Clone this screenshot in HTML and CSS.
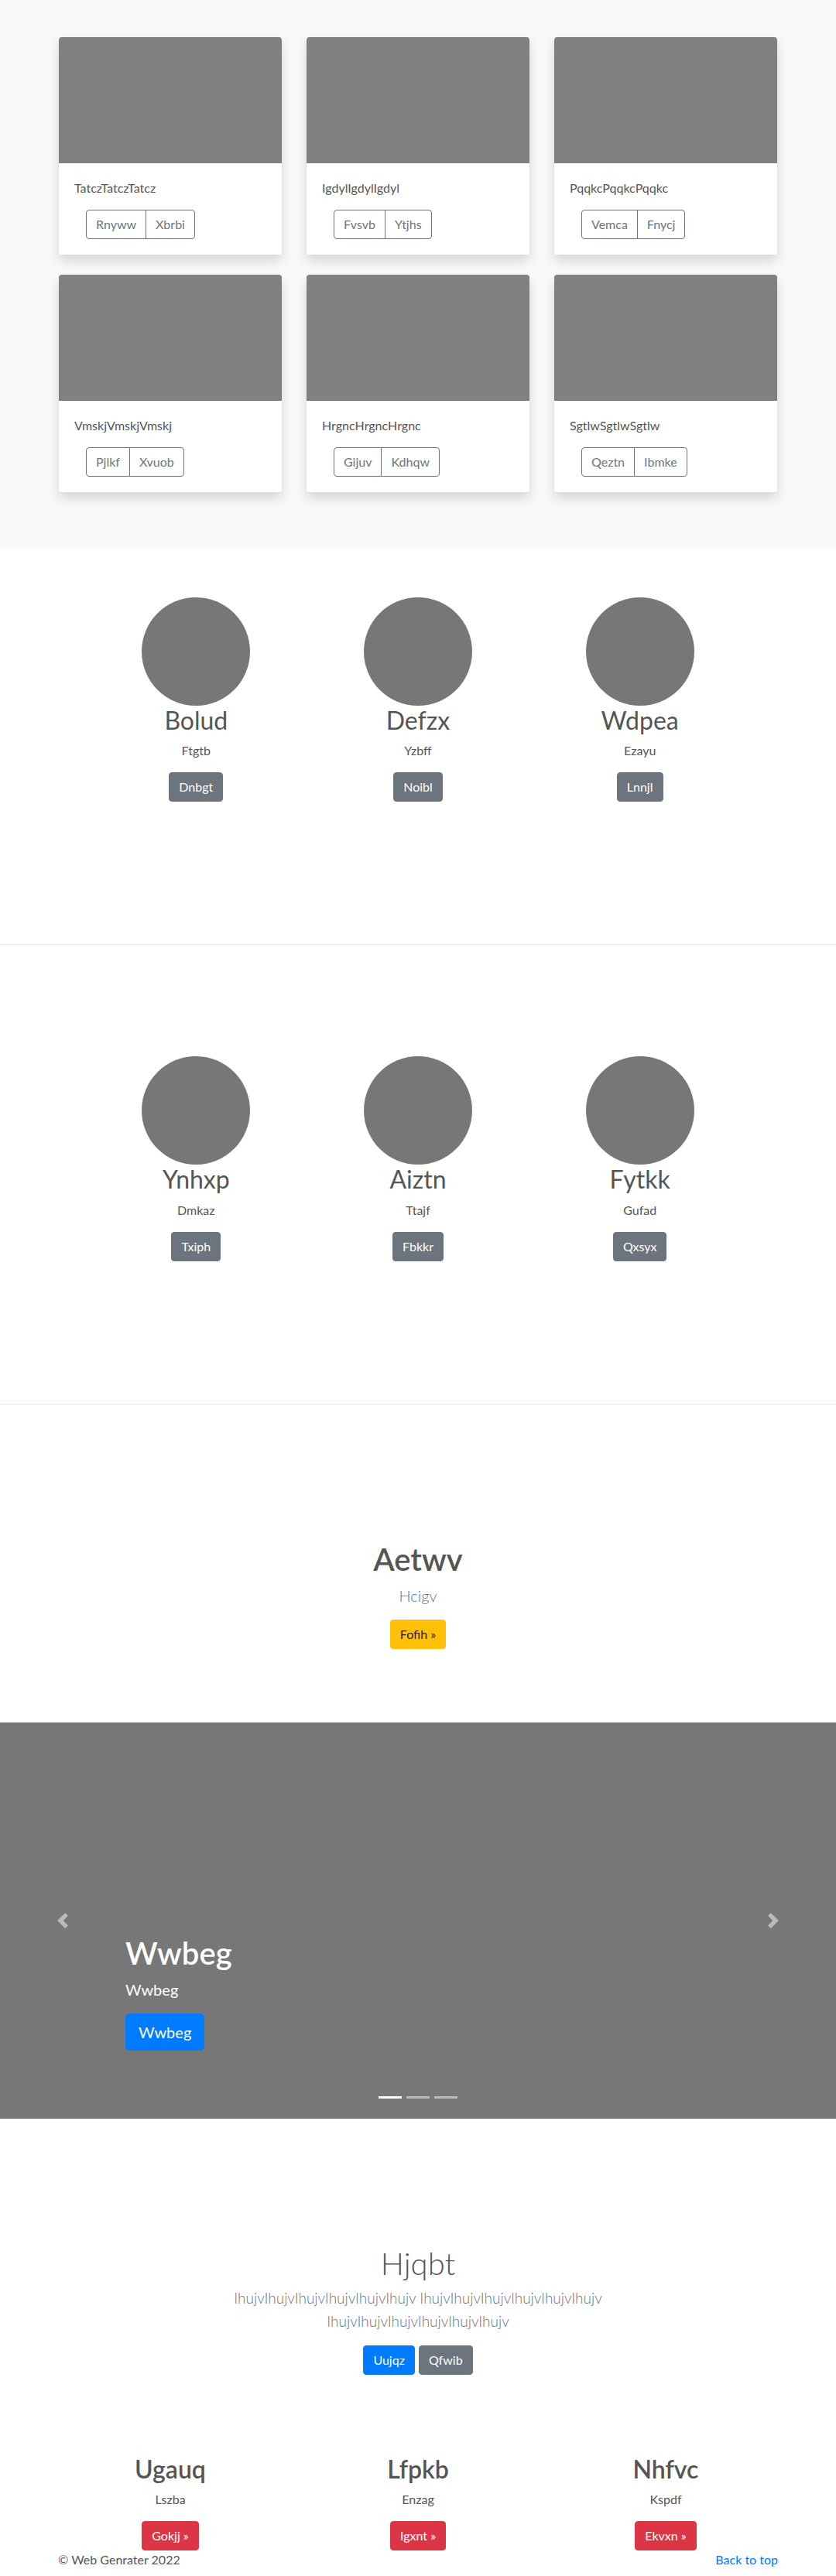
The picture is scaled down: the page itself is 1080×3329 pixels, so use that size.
FILE: index.html
```html
<!DOCTYPE html>
<html lang="en">
<head>
<meta charset="utf-8">
<title>Web Genrater</title>
<link rel="stylesheet" href="styles.css">
</head>
<body>
<section class="album">
  <div class="album-grid">
    <div class="card">
      <div class="card-img"></div>
      <div class="card-body">
        <p class="card-text">TatczTatczTatcz</p>
        <div class="btn-group"><a href="#" class="btn btn-outline">Rnyww</a><a href="#" class="btn btn-outline">Xbrbi</a></div>
      </div>
    </div>
    <div class="card">
      <div class="card-img"></div>
      <div class="card-body">
        <p class="card-text">IgdylIgdylIgdyl</p>
        <div class="btn-group"><a href="#" class="btn btn-outline">Fvsvb</a><a href="#" class="btn btn-outline">Ytjhs</a></div>
      </div>
    </div>
    <div class="card">
      <div class="card-img"></div>
      <div class="card-body">
        <p class="card-text">PqqkcPqqkcPqqkc</p>
        <div class="btn-group"><a href="#" class="btn btn-outline">Vemca</a><a href="#" class="btn btn-outline">Fnycj</a></div>
      </div>
    </div>
    <div class="card">
      <div class="card-img"></div>
      <div class="card-body">
        <p class="card-text">VmskjVmskjVmskj</p>
        <div class="btn-group"><a href="#" class="btn btn-outline">Pjlkf</a><a href="#" class="btn btn-outline">Xvuob</a></div>
      </div>
    </div>
    <div class="card">
      <div class="card-img"></div>
      <div class="card-body">
        <p class="card-text">HrgncHrgncHrgnc</p>
        <div class="btn-group"><a href="#" class="btn btn-outline">Gijuv</a><a href="#" class="btn btn-outline">Kdhqw</a></div>
      </div>
    </div>
    <div class="card">
      <div class="card-img"></div>
      <div class="card-body">
        <p class="card-text">SgtlwSgtlwSgtlw</p>
        <div class="btn-group"><a href="#" class="btn btn-outline">Qeztn</a><a href="#" class="btn btn-outline">Ibmke</a></div>
      </div>
    </div>
  </div>
</section>

<section class="marketing">
  <div class="feature-grid">
    <div class="feature">
      <div class="circle"></div>
      <h2>Bolud</h2>
      <p>Ftgtb</p>
      <div class="actions"><a href="#" class="btn btn-secondary">Dnbgt</a></div>
    </div>
    <div class="feature">
      <div class="circle"></div>
      <h2>Defzx</h2>
      <p>Yzbff</p>
      <div class="actions"><a href="#" class="btn btn-secondary">Noibl</a></div>
    </div>
    <div class="feature">
      <div class="circle"></div>
      <h2>Wdpea</h2>
      <p>Ezayu</p>
      <div class="actions"><a href="#" class="btn btn-secondary">Lnnjl</a></div>
    </div>
  </div>
</section>

<hr class="divider">

<section class="marketing">
  <div class="feature-grid">
    <div class="feature">
      <div class="circle"></div>
      <h2>Ynhxp</h2>
      <p>Dmkaz</p>
      <div class="actions"><a href="#" class="btn btn-secondary">Txiph</a></div>
    </div>
    <div class="feature">
      <div class="circle"></div>
      <h2>Aiztn</h2>
      <p>Ttajf</p>
      <div class="actions"><a href="#" class="btn btn-secondary">Fbkkr</a></div>
    </div>
    <div class="feature">
      <div class="circle"></div>
      <h2>Fytkk</h2>
      <p>Gufad</p>
      <div class="actions"><a href="#" class="btn btn-secondary">Qxsyx</a></div>
    </div>
  </div>
</section>

<hr class="divider">

<section class="cta">
  <h1 class="cta-title">Aetwv</h1>
  <p class="lead">Hcigv</p>
  <div class="center-actions"><a href="#" class="btn btn-warning">Fofih &raquo;</a></div>
</section>

<section class="carousel">
  <div class="carousel-caption">
    <h1>Wwbeg</h1>
    <p>Wwbeg</p>
    <div class="cap-actions"><a href="#" class="btn btn-lg btn-primary">Wwbeg</a></div>
  </div>
  <a href="#" class="carousel-control prev">
    <svg width="20" height="20" viewBox="0 0 8 8" fill="#fff"><path d="M5.25 0l-4 4 4 4 1.5-1.5L4.25 4l2.5-2.5L5.25 0z"/></svg>
  </a>
  <a href="#" class="carousel-control next">
    <svg width="20" height="20" viewBox="0 0 8 8" fill="#fff"><path d="M2.75 0l-1.5 1.5L3.75 4l-2.5 2.5L2.75 8l4-4-4-4z"/></svg>
  </a>
  <ol class="indicators">
    <li class="active"></li>
    <li></li>
    <li></li>
  </ol>
</section>

<section class="intro">
  <h1 class="intro-title">Hjqbt</h1>
  <p class="lead intro-lead">IhujvIhujvIhujvIhujvIhujvIhujv IhujvIhujvIhujvIhujvIhujvIhujv IhujvIhujvIhujvIhujvIhujvIhujv</p>
  <div class="intro-actions"><a href="#" class="btn btn-primary">Uujqz</a><a href="#" class="btn btn-secondary">Qfwib</a></div>
</section>

<section class="columns">
  <div class="col-grid">
    <div class="col">
      <h2>Ugauq</h2>
      <p>Lszba</p>
      <div class="actions"><a href="#" class="btn btn-danger">Gokjj &raquo;</a></div>
    </div>
    <div class="col">
      <h2>Lfpkb</h2>
      <p>Enzag</p>
      <div class="actions"><a href="#" class="btn btn-danger">Igxnt &raquo;</a></div>
    </div>
    <div class="col">
      <h2>Nhfvc</h2>
      <p>Kspdf</p>
      <div class="actions"><a href="#" class="btn btn-danger">Ekvxn &raquo;</a></div>
    </div>
  </div>
</section>

<footer class="footer">
  <p>&copy; Web Genrater 2022</p>
  <p><a href="#">Back to top</a></p>
</footer>
</body>
</html>
```
FILE: styles.css
```css
* { box-sizing: border-box; }

html, body {
  margin: 0;
  padding: 0;
}

body {
  font-family: Lato, "Segoe UI", "Open Sans", sans-serif;
  font-size: 16px;
  line-height: 24px;
  color: #555;
  background: #fff;
}

p { margin: 0; }
h1, h2 { margin: 0; }

/* Buttons */
.btn {
  display: inline-block;
  padding: 6px 12px;
  font-size: 16px;
  line-height: 24px;
  font-weight: 400;
  border: 1px solid transparent;
  border-radius: 4px;
  text-decoration: none;
  text-align: center;
  white-space: nowrap;
}
.btn-outline { color: #6c757d; border-color: #6c757d; background: transparent; }
.btn-secondary { color: #fff; background: #6c757d; border-color: #6c757d; }
.btn-primary { color: #fff; background: #007bff; border-color: #007bff; }
.btn-warning { color: #212529; background: #ffc107; border-color: #ffc107; }
.btn-danger { color: #fff; background: #dc3545; border-color: #dc3545; }
.btn-lg {
  padding: 8px 16px;
  font-size: 20px;
  line-height: 30px;
  border-radius: 5px;
}

/* Album */
.album {
  background: #f8f9fa;
  padding: 48px 0 72px;
}
.album-grid {
  width: 928px;
  margin: 0 auto;
  display: grid;
  grid-template-columns: repeat(3, 288px);
  column-gap: 32px;
  row-gap: 26px;
}
.card {
  background: #fff;
  border-radius: 4px;
  overflow: hidden;
  box-shadow: 0 8px 16px rgba(0, 0, 0, 0.15);
}
.card-img {
  height: 163px;
  background: #808080;
}
.card-body { padding: 20px; }
.card-text { margin-bottom: 16px; }
.btn-group {
  display: inline-flex;
  margin-left: 15px;
}
.btn-group .btn:first-child {
  border-top-right-radius: 0;
  border-bottom-right-radius: 0;
}
.btn-group .btn + .btn {
  margin-left: -1px;
  border-top-left-radius: 0;
  border-bottom-left-radius: 0;
}

/* Marketing */
.marketing { padding: 64px 0; }
.feature-grid {
  width: 860px;
  margin: 0 auto;
  display: grid;
  grid-template-columns: repeat(3, 1fr);
}
.feature {
  text-align: center;
  margin-bottom: 24px;
}
.circle {
  width: 140px;
  height: 140px;
  border-radius: 50%;
  background: #777;
  margin: 0 auto;
}
.feature h2 {
  font-size: 32px;
  line-height: 38.4px;
  font-weight: 400;
  margin-bottom: 8px;
}
.feature p { margin-bottom: 16px; }
.actions {
  display: flex;
  justify-content: center;
  margin-bottom: 16px;
}

.divider {
  border: 0;
  border-top: 1px solid rgba(0, 0, 0, 0.1);
  margin: 80px 0;
  height: 0;
}

/* CTA */
.cta {
  padding: 96px 0 95px;
  text-align: center;
}
.cta-title {
  font-size: 40px;
  line-height: 48px;
  font-weight: 600;
  margin-bottom: 8px;
}
.lead {
  font-size: 20px;
  line-height: 30px;
  font-weight: 300;
  color: #6c757d;
}
.cta .lead { margin-bottom: 16px; }
.center-actions {
  display: flex;
  justify-content: center;
}

/* Carousel */
.carousel {
  position: relative;
  height: 512px;
  background: #777;
  overflow: hidden;
}
.carousel-caption {
  position: absolute;
  left: 15%;
  right: 15%;
  bottom: 52px;
  padding: 20px 0;
  color: #fff;
  text-align: left;
}
.carousel-caption h1 {
  font-size: 40px;
  line-height: 48px;
  font-weight: 600;
  margin-bottom: 8px;
}
.carousel-caption p {
  font-size: 20px;
  line-height: 30px;
  margin-bottom: 16px;
}
.cap-actions {
  display: flex;
  margin-bottom: 16px;
}
.carousel-control {
  position: absolute;
  top: 0;
  bottom: 0;
  width: 15%;
  display: flex;
  align-items: center;
  justify-content: center;
  opacity: 0.5;
}
.carousel-control.prev { left: 0; }
.carousel-control.next { right: 0; }
.indicators {
  position: absolute;
  left: 0;
  right: 0;
  bottom: 0;
  margin: 0 0 16px;
  padding: 0;
  list-style: none;
  display: flex;
  justify-content: center;
}
.indicators li {
  width: 30px;
  height: 23px;
  margin: 0 3px;
  border-top: 10px solid transparent;
  border-bottom: 10px solid transparent;
  background: #fff;
  background-clip: padding-box;
  opacity: 0.5;
}
.indicators li.active { opacity: 1; }

/* Intro */
.intro {
  padding: 163px 0 47px;
  text-align: center;
}
.intro-title {
  font-size: 40px;
  line-height: 48px;
  font-weight: 300;
  margin-bottom: 6px;
}
.intro-lead {
  max-width: 610px;
  margin: 0 auto 16px;
  font-size: 19px;
}
.intro-actions {
  display: flex;
  justify-content: center;
  gap: 5px;
  margin: 8px 0;
}

/* Columns */
.columns { padding-top: 48px; }
.col-grid {
  width: 960px;
  margin: 0 auto;
  display: grid;
  grid-template-columns: repeat(3, 1fr);
}
.col { text-align: center; }
.col h2 {
  font-size: 32px;
  line-height: 38.4px;
  font-weight: 600;
  margin-bottom: 8px;
}
.col p { margin-bottom: 16px; }
.col .actions { margin-bottom: 0; }

/* Footer */
.footer {
  width: 930px;
  margin: 0 auto;
  display: flex;
  justify-content: space-between;
}
.footer a {
  color: #007bff;
  text-decoration: none;
}
```
